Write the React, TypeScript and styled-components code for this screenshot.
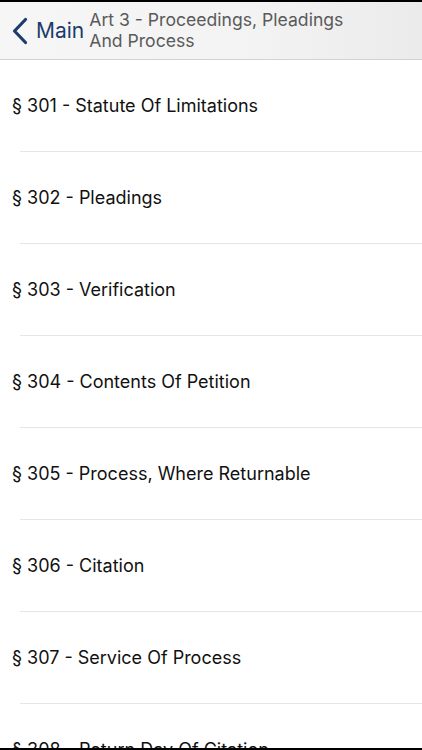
import React from "react";
import styled, { createGlobalStyle } from "styled-components";

const Global = createGlobalStyle`
  html, body { margin: 0; padding: 0; background: #fff; }
  body { font-family: Inter, "Noto Sans", sans-serif; -webkit-font-smoothing: antialiased; }
`;

const Screen = styled.div`
  width: 422px;
  height: 750px;
  box-sizing: border-box;
  overflow: hidden;
  display: flex;
  flex-direction: column;
  border-top: 2px solid #000;
  border-bottom: 2px solid #000;
  background: #fff;
`;

const NavBar = styled.header`
  flex: 0 0 auto;
  height: 57px;
  display: flex;
  align-items: center;
  background: linear-gradient(90deg, #f6f6f6 0%, #f3f3f3 60%, #ebebeb 100%);
  border-bottom: 1px solid #d2d2d2;
  box-sizing: content-box;
`;

const BackButton = styled.button`
  display: flex;
  align-items: center;
  gap: 8px;
  border: 0;
  background: none;
  padding: 0 0 0 12px;
  color: #1c3c6c;
  font-family: inherit;
  font-size: 21px;
  cursor: pointer;
`;

const Title = styled.div`
  margin-left: 5px;
  color: #5a5a5a;
  font-size: 17.6px;
  line-height: 21px;
  padding-bottom: 2px;
`;

const List = styled.ul`
  list-style: none;
  margin: 0;
  padding: 0;
`;

const Row = styled.li`
  position: relative;
  height: 92px;
  display: flex;
  align-items: center;
  padding-left: 12px;
  padding-bottom: 1px;
  box-sizing: border-box;
  font-size: 18px;
  color: #111;
  &::after {
    content: "";
    position: absolute;
    left: 20px;
    right: 0;
    bottom: 0;
    height: 1px;
    background: #e6e6e6;
  }
`;

const items = [
  "§ 301 - Statute Of Limitations",
  "§ 302 - Pleadings",
  "§ 303 - Verification",
  "§ 304 - Contents Of Petition",
  "§ 305 - Process, Where Returnable",
  "§ 306 - Citation",
  "§ 307 - Service Of Process",
  "§ 308 - Return Day Of Citation",
];

export default function App() {
  return (
    <>
      <Global />
      <Screen>
        <NavBar>
          <BackButton>
            <svg width="16" height="28" viewBox="0 0 16 28" fill="none">
              <path d="M13.5 2.5 L2.5 14 L13.5 25.5" stroke="#1c3c6c" strokeWidth="3.2" strokeLinecap="round" strokeLinejoin="round" />
            </svg>
            <span>Main</span>
          </BackButton>
          <Title>
            Art 3 - Proceedings, Pleadings
            <br />
            And Process
          </Title>
        </NavBar>
        <List>
          {items.map((t) => (
            <Row key={t}>{t}</Row>
          ))}
        </List>
      </Screen>
    </>
  );
}
